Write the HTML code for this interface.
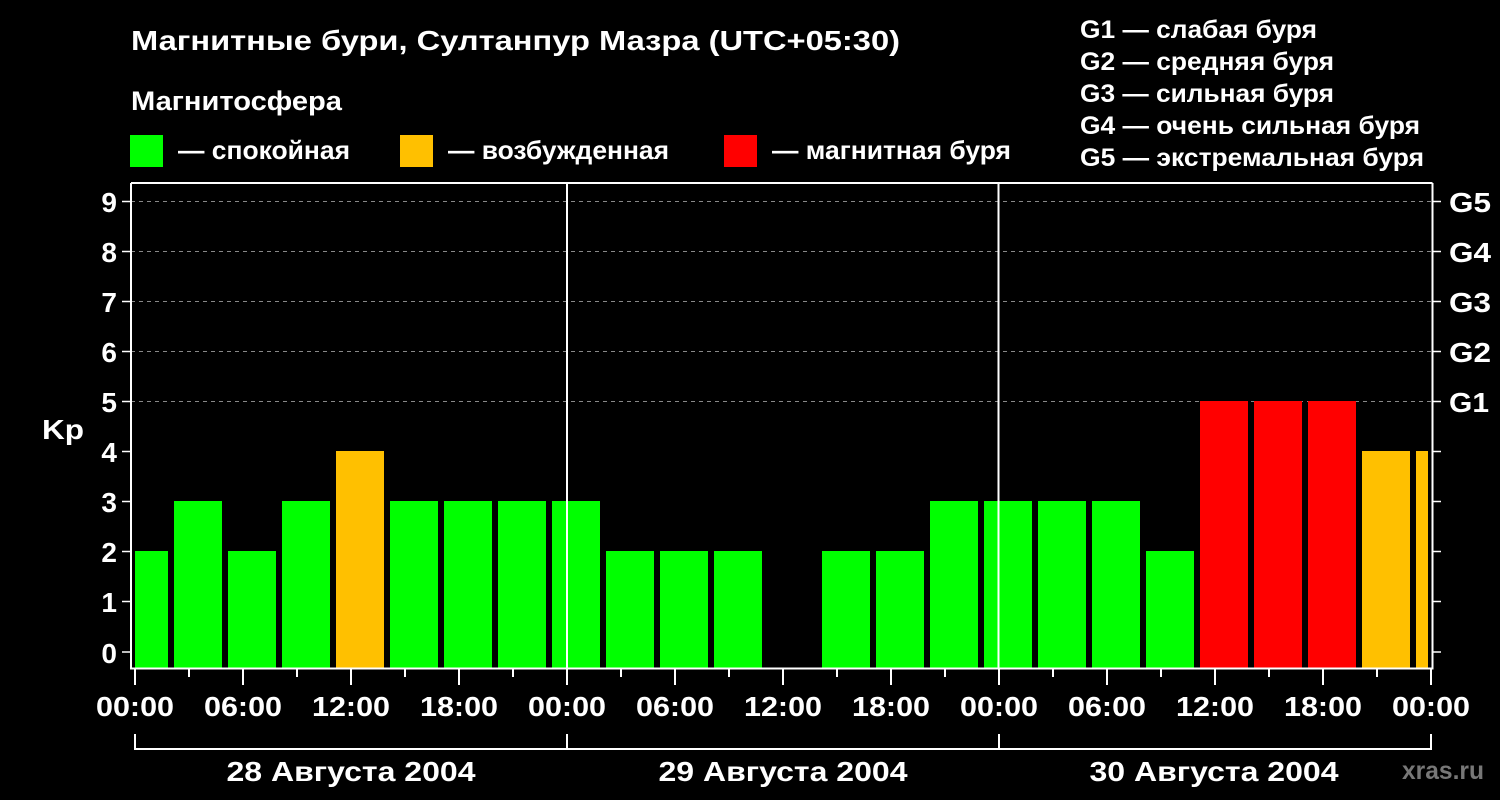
<!DOCTYPE html>
<html><head><meta charset="utf-8"><style>
html,body{margin:0;padding:0;background:#000;}
svg{display:block;}
text{font-family:"Liberation Sans",Arial,sans-serif;font-weight:bold;fill:#fff;}
</style></head><body>
<svg width="1500" height="800" viewBox="0 0 1500 800" xmlns="http://www.w3.org/2000/svg">
<rect width="1500" height="800" fill="#000"/>
<text x="131" y="50" font-size="28" textLength="769" lengthAdjust="spacingAndGlyphs">Магнитные бури, Султанпур Мазра (UTC+05:30)</text>
<text x="131" y="110" font-size="27" textLength="211" lengthAdjust="spacingAndGlyphs">Магнитосфера</text>
<rect x="130" y="135" width="33" height="32" fill="#00ff00"/>
<text x="178" y="159" font-size="26" textLength="172" lengthAdjust="spacingAndGlyphs">— спокойная</text>
<rect x="400" y="135" width="33" height="32" fill="#ffc000"/>
<text x="448" y="159" font-size="26" textLength="221" lengthAdjust="spacingAndGlyphs">— возбужденная</text>
<rect x="724" y="135" width="33" height="32" fill="#ff0000"/>
<text x="772" y="159" font-size="26" textLength="239" lengthAdjust="spacingAndGlyphs">— магнитная буря</text>
<g font-size="25" lengthAdjust="spacingAndGlyphs">
<text x="1080" y="38" textLength="237" lengthAdjust="spacingAndGlyphs">G1 — слабая буря</text>
<text x="1080" y="70" textLength="254" lengthAdjust="spacingAndGlyphs">G2 — средняя буря</text>
<text x="1080" y="102" textLength="254" lengthAdjust="spacingAndGlyphs">G3 — сильная буря</text>
<text x="1080" y="134" textLength="340" lengthAdjust="spacingAndGlyphs">G4 — очень сильная буря</text>
<text x="1080" y="166" textLength="344" lengthAdjust="spacingAndGlyphs">G5 — экстремальная буря</text>
</g>
<g stroke="#888" stroke-dasharray="4,4" stroke-width="1">
<line x1="131" y1="201.5" x2="1432" y2="201.5"/>
<line x1="131" y1="251.5" x2="1432" y2="251.5"/>
<line x1="131" y1="301.5" x2="1432" y2="301.5"/>
<line x1="131" y1="351.5" x2="1432" y2="351.5"/>
<line x1="131" y1="401.5" x2="1432" y2="401.5"/>
</g>
<g fill="#00ff00">
<rect x="135" y="551" width="33" height="117"/>
<rect x="174" y="501" width="48" height="167"/>
<rect x="228" y="551" width="48" height="117"/>
<rect x="282" y="501" width="48" height="167"/>
<rect x="390" y="501" width="48" height="167"/>
<rect x="444" y="501" width="48" height="167"/>
<rect x="498" y="501" width="48" height="167"/>
<rect x="552" y="501" width="48" height="167"/>
<rect x="606" y="551" width="48" height="117"/>
<rect x="660" y="551" width="48" height="117"/>
<rect x="714" y="551" width="48" height="117"/>
<rect x="822" y="551" width="48" height="117"/>
<rect x="876" y="551" width="48" height="117"/>
<rect x="930" y="501" width="48" height="167"/>
<rect x="984" y="501" width="48" height="167"/>
<rect x="1038" y="501" width="48" height="167"/>
<rect x="1092" y="501" width="48" height="167"/>
<rect x="1146" y="551" width="48" height="117"/>
</g>
<g fill="#ffc000">
<rect x="336" y="451" width="48" height="217"/>
<rect x="1362" y="451" width="48" height="217"/>
<rect x="1416" y="451" width="12" height="217"/>
</g>
<g fill="#ff0000">
<rect x="1200" y="401" width="48" height="267"/>
<rect x="1254" y="401" width="48" height="267"/>
<rect x="1308" y="401" width="48" height="267"/>
</g>
<g stroke="#fff" stroke-width="2" fill="none">
<polyline points="131,183 131,668.5 1432.5,668.5 1432.5,183"/>
<line x1="131" y1="183" x2="1432.5" y2="183"/>
<line x1="567" y1="183" x2="567" y2="668"/>
<line x1="998.5" y1="183" x2="998.5" y2="668"/>
</g>
<g stroke="#fff" stroke-width="1.5">
<line x1="122" y1="201.5" x2="130" y2="201.5"/><line x1="122" y1="251.5" x2="130" y2="251.5"/>
<line x1="122" y1="301.5" x2="130" y2="301.5"/><line x1="122" y1="351.5" x2="130" y2="351.5"/>
<line x1="122" y1="401.5" x2="130" y2="401.5"/><line x1="122" y1="451.5" x2="130" y2="451.5"/>
<line x1="122" y1="501.5" x2="130" y2="501.5"/><line x1="122" y1="551.5" x2="130" y2="551.5"/>
<line x1="122" y1="601.5" x2="130" y2="601.5"/><line x1="122" y1="652" x2="130" y2="652"/>
<line x1="1433" y1="201.5" x2="1441" y2="201.5"/><line x1="1433" y1="251.5" x2="1441" y2="251.5"/>
<line x1="1433" y1="301.5" x2="1441" y2="301.5"/><line x1="1433" y1="351.5" x2="1441" y2="351.5"/>
<line x1="1433" y1="401.5" x2="1441" y2="401.5"/><line x1="1433" y1="451.5" x2="1441" y2="451.5"/>
<line x1="1433" y1="501.5" x2="1441" y2="501.5"/><line x1="1433" y1="551.5" x2="1441" y2="551.5"/>
<line x1="1433" y1="601.5" x2="1441" y2="601.5"/><line x1="1433" y1="652" x2="1441" y2="652"/>
</g>
<g font-size="28" text-anchor="end">
<text x="117" y="212">9</text><text x="117" y="262">8</text><text x="117" y="312">7</text>
<text x="117" y="362">6</text><text x="117" y="412">5</text><text x="117" y="462">4</text>
<text x="117" y="512">3</text><text x="117" y="562">2</text><text x="117" y="612">1</text>
<text x="117" y="663">0</text>
</g>
<text x="42" y="439" font-size="28" textLength="42" lengthAdjust="spacingAndGlyphs">Kp</text>
<g font-size="28">
<text x="1449" y="212" textLength="42" lengthAdjust="spacingAndGlyphs">G5</text>
<text x="1449" y="262" textLength="42" lengthAdjust="spacingAndGlyphs">G4</text>
<text x="1449" y="312" textLength="42" lengthAdjust="spacingAndGlyphs">G3</text>
<text x="1449" y="362" textLength="42" lengthAdjust="spacingAndGlyphs">G2</text>
<text x="1449" y="412" textLength="40" lengthAdjust="spacingAndGlyphs">G1</text>
</g>
<g stroke="#fff" stroke-width="2">
<line x1="135" y1="669" x2="135" y2="685"/><line x1="189" y1="669" x2="189" y2="677"/>
<line x1="243" y1="669" x2="243" y2="685"/><line x1="297" y1="669" x2="297" y2="677"/>
<line x1="351" y1="669" x2="351" y2="685"/><line x1="405" y1="669" x2="405" y2="677"/>
<line x1="459" y1="669" x2="459" y2="685"/><line x1="513" y1="669" x2="513" y2="677"/>
<line x1="567" y1="669" x2="567" y2="685"/><line x1="621" y1="669" x2="621" y2="677"/>
<line x1="675" y1="669" x2="675" y2="685"/><line x1="729" y1="669" x2="729" y2="677"/>
<line x1="783" y1="669" x2="783" y2="685"/><line x1="837" y1="669" x2="837" y2="677"/>
<line x1="891" y1="669" x2="891" y2="685"/><line x1="945" y1="669" x2="945" y2="677"/>
<line x1="999" y1="669" x2="999" y2="685"/><line x1="1053" y1="669" x2="1053" y2="677"/>
<line x1="1107" y1="669" x2="1107" y2="685"/><line x1="1161" y1="669" x2="1161" y2="677"/>
<line x1="1215" y1="669" x2="1215" y2="685"/><line x1="1269" y1="669" x2="1269" y2="677"/>
<line x1="1323" y1="669" x2="1323" y2="685"/><line x1="1377" y1="669" x2="1377" y2="677"/>
<line x1="1431" y1="669" x2="1431" y2="685"/>
<polyline fill="none" points="135,734 135,749 1431,749 1431,734"/>
<line x1="567" y1="734" x2="567" y2="749"/><line x1="999" y1="734" x2="999" y2="749"/>
</g>
<g font-size="28" text-anchor="middle">
<text x="135" y="716" textLength="78" lengthAdjust="spacingAndGlyphs">00:00</text>
<text x="243" y="716" textLength="78" lengthAdjust="spacingAndGlyphs">06:00</text>
<text x="351" y="716" textLength="78" lengthAdjust="spacingAndGlyphs">12:00</text>
<text x="459" y="716" textLength="78" lengthAdjust="spacingAndGlyphs">18:00</text>
<text x="567" y="716" textLength="78" lengthAdjust="spacingAndGlyphs">00:00</text>
<text x="675" y="716" textLength="78" lengthAdjust="spacingAndGlyphs">06:00</text>
<text x="783" y="716" textLength="78" lengthAdjust="spacingAndGlyphs">12:00</text>
<text x="891" y="716" textLength="78" lengthAdjust="spacingAndGlyphs">18:00</text>
<text x="999" y="716" textLength="78" lengthAdjust="spacingAndGlyphs">00:00</text>
<text x="1107" y="716" textLength="78" lengthAdjust="spacingAndGlyphs">06:00</text>
<text x="1215" y="716" textLength="78" lengthAdjust="spacingAndGlyphs">12:00</text>
<text x="1323" y="716" textLength="78" lengthAdjust="spacingAndGlyphs">18:00</text>
<text x="1431" y="716" textLength="78" lengthAdjust="spacingAndGlyphs">00:00</text>
<text x="351" y="781" textLength="249" lengthAdjust="spacingAndGlyphs">28 Августа 2004</text>
<text x="783" y="781" textLength="249" lengthAdjust="spacingAndGlyphs">29 Августа 2004</text>
<text x="1214" y="781" textLength="249" lengthAdjust="spacingAndGlyphs">30 Августа 2004</text>
</g>
<text x="1402" y="779" font-size="25" textLength="82" lengthAdjust="spacingAndGlyphs" style="fill:#777">xras.ru</text>
</svg>
</body></html>
